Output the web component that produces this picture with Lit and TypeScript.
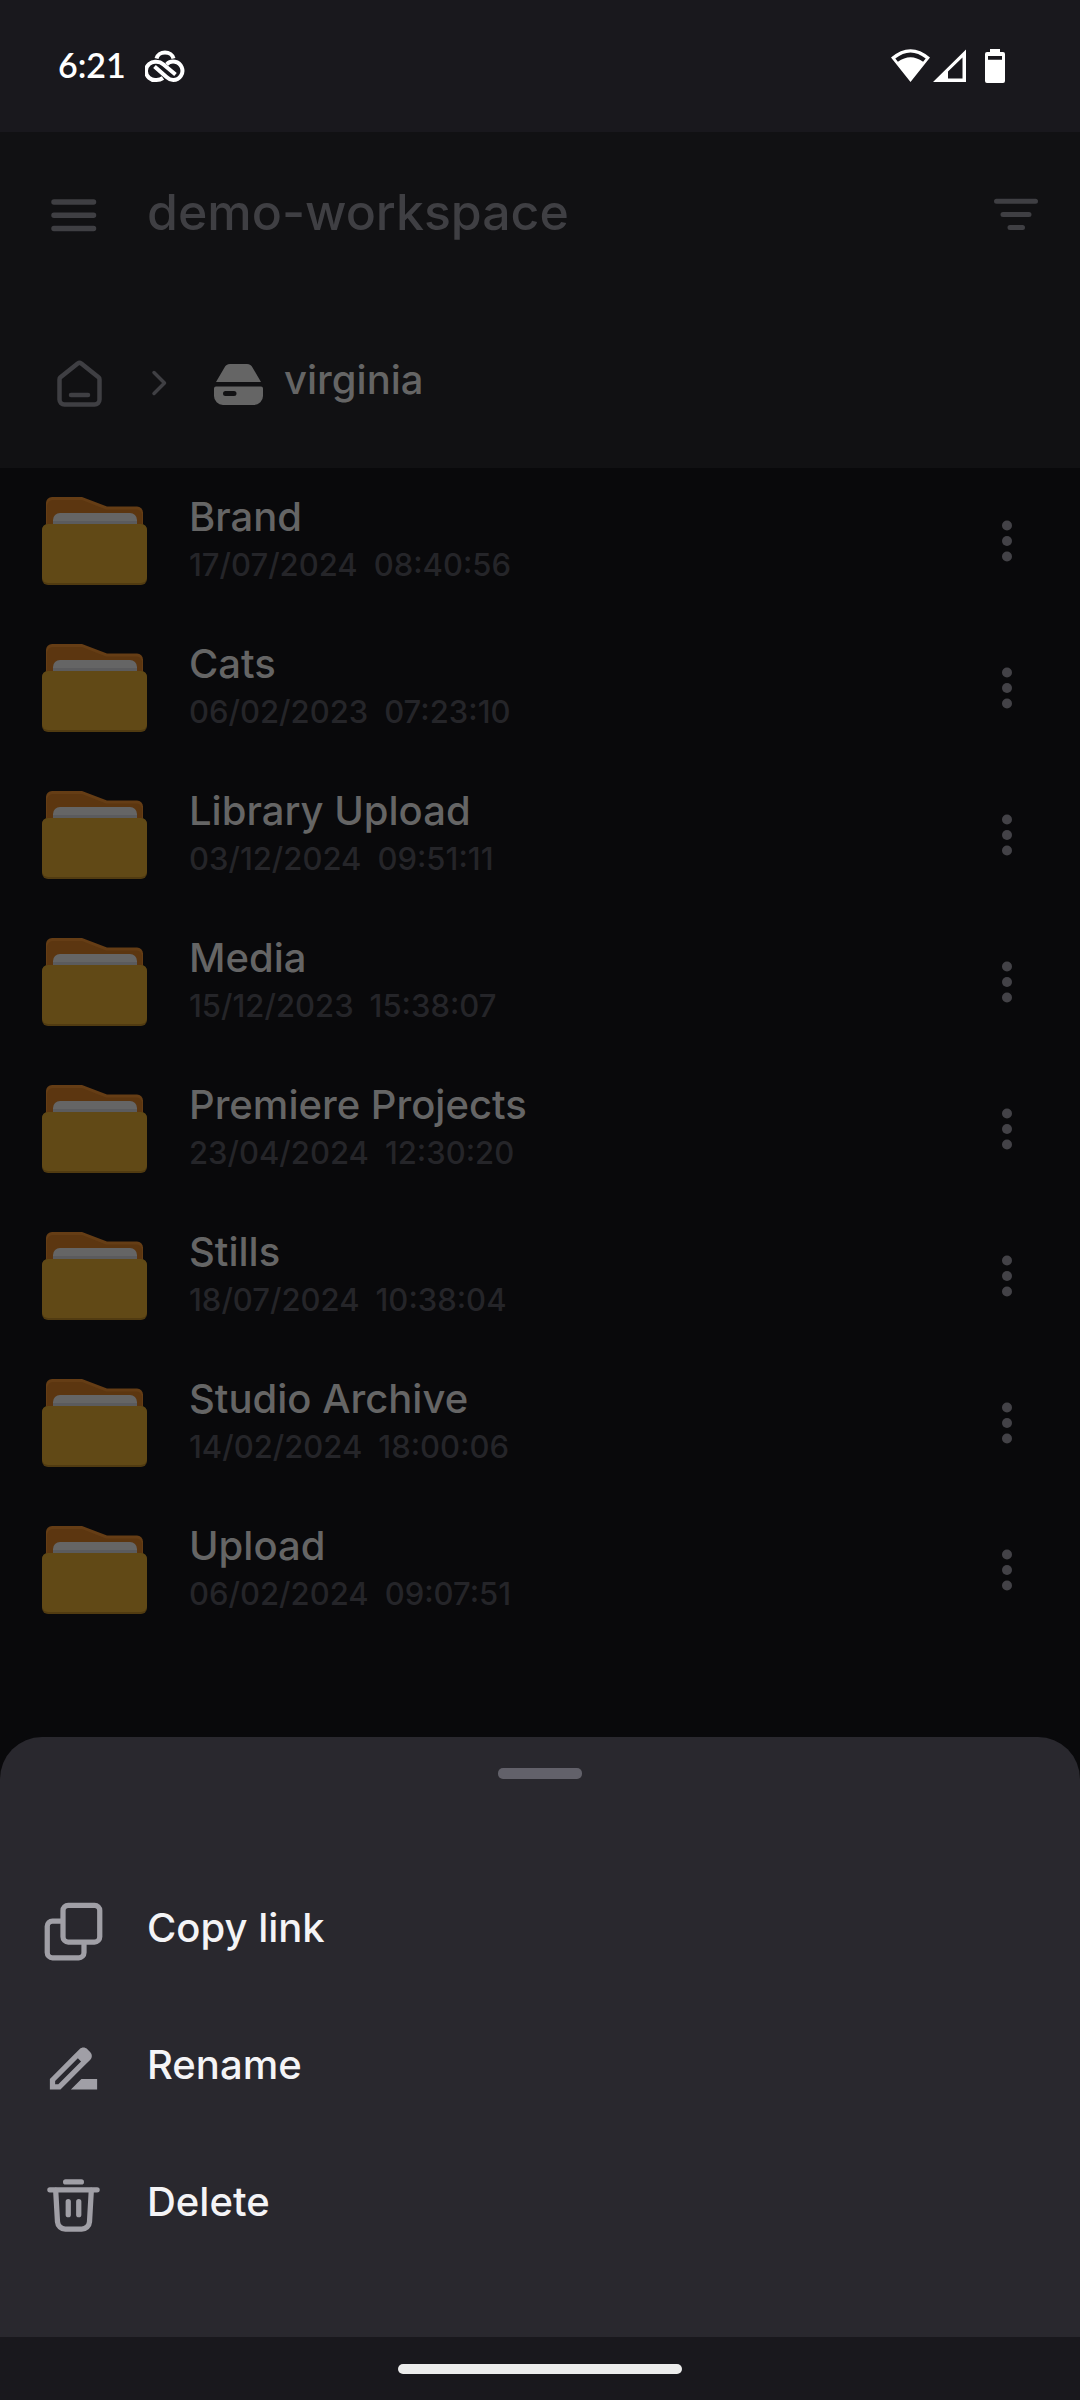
import { LitElement, html, css, svg } from "lit";
import { customElement, property } from "lit/decorators.js";

interface Folder {
  name: string;
  date: string;
  time: string;
}

const FOLDERS: Folder[] = [
  { name: "Brand", date: "17/07/2024", time: "08:40:56" },
  { name: "Cats", date: "06/02/2023", time: "07:23:10" },
  { name: "Library Upload", date: "03/12/2024", time: "09:51:11" },
  { name: "Media", date: "15/12/2023", time: "15:38:07" },
  { name: "Premiere Projects", date: "23/04/2024", time: "12:30:20" },
  { name: "Stills", date: "18/07/2024", time: "10:38:04" },
  { name: "Studio Archive", date: "14/02/2024", time: "18:00:06" },
  { name: "Upload", date: "06/02/2024", time: "09:07:51" },
];

const copyIcon = svg`
  <rect x="8" y="2" width="14" height="14" rx="2" fill="none" stroke="currentColor" stroke-width="2"/>
  <path d="M8 8H4a2 2 0 0 0-2 2v10a2 2 0 0 0 2 2h10a2 2 0 0 0 2-2v-4" fill="none" stroke="currentColor" stroke-width="2"/>`;

const renameIcon = svg`
  <path fill="currentColor" d="M18.41 5.8L17.2 4.59c-.78-.78-2.05-.78-2.83 0l-2.68 2.68L3 15.96V20h4.04l8.74-8.74 2.63-2.63c.79-.78.79-2.05 0-2.83zM6.21 18H5v-1.21l8.66-8.66 1.21 1.21L6.21 18zM11 20l4-4h6v4H11z"/>`;

const deleteIcon = svg`
  <path d="M9 3h6M3 6h18M10 10.5v5M14 10.5v5M5.2 6l.7 12.2a3 3 0 0 0 3 2.8h6.200a3 3 0 0 0 3-2.8L18.800 6" fill="none" stroke="currentColor" stroke-width="2" stroke-linecap="round"/>`;

const ACTIONS = [
  { label: "Copy link", icon: copyIcon },
  { label: "Rename", icon: renameIcon },
  { label: "Delete", icon: deleteIcon },
];

@customElement("status-bar")
export class StatusBar extends LitElement {
  static styles = css`
    :host {
      display: flex;
      align-items: center;
      height: 132px;
      padding: 0 75px 0 58px;
      background: #19181d;
      color: #fff;
      font-family: Lato, "Open Sans", sans-serif;
      font-size: 34px;
      line-height: 40px;
      box-sizing: border-box;
    }
    svg {
      display: block;
    }
    .clock {
      padding-bottom: 2px;
      font-weight: 600;
    }
    .cloud {
      margin-left: 19px;
    }
    .signals {
      display: flex;
      margin-left: auto;
    }
  `;

  render() {
    return html`
      <span class="clock">6:21</span>
      <svg class="cloud" width="40" height="36" viewBox="145 49 40 36" fill="none" stroke="#fff" stroke-width="4">
        <path d="M156.500 59.500a8.700 7.500 0 0 1 17 0"/>
        <path d="M163 79c-2 1.400-4 2-6.500 2a9.200 9.200 0 1 1 0-18.200c3 0 5 1 7 2.700l12 10"/>
        <path d="M154.500 67.500l12 10.500c2 1.800 4 3 6.700 3a9.200 9.200 0 1 0-6.500-15.700"/>
      </svg>
      <div class="signals">
        <svg width="114" height="36" viewBox="891 48 114 36" fill="#fff">
          <path fill-rule="evenodd" d="M891 57.500Q910.500 41 930 57.500L910.500 82zM895.300 58.500l2.600 3.300Q910.500 52.500 923.100 61.800l2.600-3.300Q910.500 46.500 895.300 58.500z"/>
          <path fill-rule="evenodd" d="M933 82L966 49.500V82zM948 71.500V78.500H962.500V57.500z"/>
          <path fill-rule="evenodd" d="M990 49h10v3h3a2 2 0 0 1 2 2v27a2 2 0 0 1-2 2h-16a2 2 0 0 1-2-2V54a2 2 0 0 1 2-2h3zM988 56v3.700h14V56z"/>
        </svg>
      </div>
    `;
  }
}

@customElement("folder-row")
export class FolderRow extends LitElement {
  @property({ attribute: false }) folder!: Folder;

  static styles = css`
    :host {
      display: flex;
      align-items: center;
      gap: 42px;
      height: 147px;
      padding: 0 42px 2px;
      box-sizing: border-box;
    }
    svg {
      display: block;
      flex: none;
    }
    .text {
      display: flex;
      flex: 1;
      flex-direction: column;
      gap: 4px;
      min-width: 0;
      padding-bottom: 4px;
    }
    .name {
      color: #656565;
      font-size: 40px;
      font-weight: 500;
      line-height: 48px;
    }
    .stamp {
      display: flex;
      gap: 16px;
      color: #252529;
      font-size: 31px;
      font-weight: 500;
      line-height: 40px;
    }
    .more {
      display: flex;
      justify-content: center;
      width: 63px;
      padding: 8px 0;
      border: 0;
      background: none;
      color: #434247;
    }
  `;

  render() {
    const { name, date, time } = this.folder;
    return html`
      <svg width="105" height="88" viewBox="0 0 105 88" aria-hidden="true">
        <path fill="#653d15" d="M4 6a6 6 0 0 1 6-6h30L65 9.500h30a6 6 0 0 1 6 6V34H4z"/>
        <path fill="#5c3610" d="M5 9a6 6 0 0 1 6-6h29L64 12.500h30a6 6 0 0 1 6 5V34H5z"/>
        <path fill="#656565" d="M11 23a7 7 0 0 1 7-7h70a7 7 0 0 1 7 7v12H11z"/>
        <path fill="#5b5b5d" d="M11 24h84v5H11z"/>
        <rect y="27" width="105" height="61" rx="6" fill="#513b11"/>
        <rect y="27" width="105" height="59" rx="6" fill="#614916"/>
      </svg>
      <div class="text">
        <span class="name">${name}</span>
        <span class="stamp"><span>${date}</span><span>${time}</span></span>
      </div>
      <button class="more" aria-label="More actions for ${name}">
        <svg width="10" height="42" viewBox="0 0 10 42" fill="currentColor">
          <circle cx="5" cy="5.500" r="5"/><circle cx="5" cy="21" r="5"/><circle cx="5" cy="36.500" r="5"/>
        </svg>
      </button>
    `;
  }
}

@customElement("app-root")
export class AppRoot extends LitElement {
  static styles = css`
    :host {
      display: flex;
      flex-direction: column;
      min-height: 100vh;
      background: #09090b;
      font-family: Inter, "Liberation Sans", sans-serif;
    }
    svg {
      display: block;
      flex: none;
    }
    button {
      border: 0;
      padding: 0;
      background: none;
      color: inherit;
      font: inherit;
      text-align: left;
    }
    a {
      color: inherit;
      text-decoration: none;
    }
    h1,
    ul {
      margin: 0;
      padding: 0;
      list-style: none;
    }
    .header {
      background: #111113;
      color: #3f3f43;
    }
    .toolbar,
    .crumbs {
      display: flex;
      align-items: center;
      height: 166px;
      padding: 0 42px 2px;
    }
    .toolbar {
      gap: 42px;
    }
    .title {
      flex: 1;
      padding-bottom: 6px;
      font-size: 50px;
      font-weight: 500;
      line-height: 60px;
    }
    .crumbs {
      gap: 32px;
    }
    .current {
      display: flex;
      align-items: center;
      gap: 14px;
      color: #656565;
      font-size: 40px;
      font-weight: 500;
      line-height: 48px;
    }
    .current span {
      padding-bottom: 6px;
    }
    .list {
      flex: 1;
      padding-bottom: 93px;
    }
    .sheet {
      display: flex;
      flex-direction: column;
      padding: 31px 0 63px;
      border-radius: 42px 42px 0 0;
      background: #29282e;
    }
    .handle {
      align-self: center;
      width: 84px;
      height: 11px;
      margin-bottom: 84px;
      border-radius: 5px;
      background: #62616a;
    }
    .action {
      display: flex;
      align-items: center;
      gap: 42px;
      width: 100%;
      height: 137px;
      padding: 0 42px;
      color: #f4f4f6;
      font-size: 40px;
      font-weight: 500;
      line-height: 48px;
    }
    .action svg {
      color: #a09fa6;
    }
    .action span {
      padding-bottom: 8px;
    }
    .nav {
      display: flex;
      align-items: center;
      justify-content: center;
      height: 63px;
      background: #19181d;
    }
    .pill {
      width: 284px;
      height: 10px;
      border-radius: 5px;
      background: #ececec;
    }
  `;

  render() {
    return html`
      <status-bar></status-bar>
      <header class="header">
        <div class="toolbar">
          <button aria-label="Open menu">
            <svg width="63" height="63" viewBox="0 0 63 63" fill="none" stroke="currentColor" stroke-width="5.500" stroke-linecap="round">
              <path d="M12 18h39.500M12 31.300h39.500M12 44.600h39.500"/>
            </svg>
          </button>
          <h1 class="title">demo-workspace</h1>
          <button aria-label="Sort and filter">
            <svg width="45" height="63" viewBox="0 0 45 63" fill="none" stroke="currentColor" stroke-width="5" stroke-linecap="round">
              <path d="M3.500 17.200h39M10 30.400h26M17 43.600h12.500"/>
            </svg>
          </button>
        </div>
        <nav class="crumbs" aria-label="Breadcrumb">
          <a href="#home" aria-label="Home">
            <svg width="74" height="63" viewBox="0 0 74 63" fill="none" stroke="currentColor" stroke-width="4.500" stroke-linecap="round" stroke-linejoin="round">
              <path d="M17.500 27.500a3 3 0 0 1 1-2.300L35.700 11.500a3 3 0 0 1 3.600 0L56.500 25.200a3 3 0 0 1 1 2.300V47.500a5 5 0 0 1-5 5h-30a5 5 0 0 1-5-5z"/>
              <path d="M29 43h17"/>
            </svg>
          </a>
          <svg width="27" height="32" viewBox="0 0 27 32" fill="none" stroke="currentColor" stroke-width="3.500" stroke-linecap="round" stroke-linejoin="round">
            <path d="M6 5.500L16.500 16 6 26.500"/>
          </svg>
          <a class="current" href="#virginia">
            <svg width="63" height="63" viewBox="0 0 63 63" fill="currentColor">
              <path d="M17.500 15.500A6 6 0 0 1 23 12h17a6 6 0 0 1 5.500 3.500L54 30H9z"/>
              <path fill-rule="evenodd" d="M9 34.500h45a2 2 0 0 1 2 2V44a9 9 0 0 1-9 9H16a9 9 0 0 1-9-9v-7.500a2 2 0 0 1 2-2zM18.500 39a2.500 2.500 0 0 0 0 5H27a2.500 2.500 0 0 0 0-5z"/>
            </svg>
            <span>virginia</span>
          </a>
        </nav>
      </header>
      <ul class="list">
        ${FOLDERS.map((f) => html`<li><folder-row .folder=${f}></folder-row></li>`)}
      </ul>
      <section class="sheet" aria-label="Folder actions">
        <div class="handle"></div>
        ${ACTIONS.map(
          (a) => html`
            <button class="action">
              <svg width="63" height="63" viewBox="0 0 24 24" aria-hidden="true">${a.icon}</svg>
              <span>${a.label}</span>
            </button>
          `
        )}
      </section>
      <div class="nav"><div class="pill"></div></div>
    `;
  }
}
